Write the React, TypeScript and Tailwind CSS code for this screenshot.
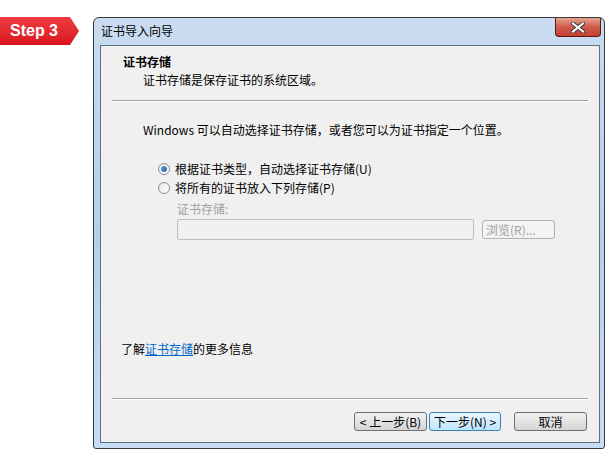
import React from "react";

const cjk = "font-['Noto_Sans_CJK_SC','Noto_Sans',sans-serif]";

function Radio({ checked }: { checked?: boolean }) {
  return (
    <span className="w-[12px] h-[12px] rounded-full border border-[#8f8f8f] bg-gradient-to-br from-[#e6e6e6] to-[#ffffff] flex items-center justify-center shrink-0">
      {checked && <span className="w-[6px] h-[6px] rounded-full bg-gradient-to-br from-[#64a3e6] to-[#1f5fa8]" />}
    </span>
  );
}

function Btn({ children, active }: { children: React.ReactNode; active?: boolean }) {
  return (
    <button
      className={
        active
          ? "w-[72px] h-[19px] rounded-[3px] border border-[#3c7fb1] bg-gradient-to-b from-[#eaf6fd] to-[#bee6fd] text-[12px] leading-none text-black flex items-center justify-center"
          : "w-[73px] h-[19px] rounded-[3px] border border-[#707070] bg-gradient-to-b from-[#f2f2f2] to-[#d4d4d4] text-[12px] leading-none text-black flex items-center justify-center"
      }
    >
      {children}
    </button>
  );
}

export default function App() {
  return (
    <div className={`w-[605px] h-[457px] bg-white flex items-start ${cjk}`}>
      <div className="mt-[17px] w-[79px] h-[28px] bg-gradient-to-b from-[#ef3b40] to-[#d9141c] [clip-path:polygon(0_0,70px_0,79px_50%,70px_100%,0_100%)] flex items-center pl-[10px]">
        <span className="text-white font-bold text-[16px] leading-none font-['Liberation_Sans',sans-serif]">Step 3</span>
      </div>

      <div className="ml-[14px] mt-[17px] w-[512px] h-[432px] border border-[#3a3a3a] rounded-t-[6px] rounded-b-[3px] bg-gradient-to-b from-[#c9dcf1] via-[#b6cfe9] to-[#c8ddf3] flex flex-col">
        <div className="h-[27px] flex items-start justify-between">
          <span className="pl-[7px] pt-[6px] text-[12px] leading-[14px] text-black">证书导入向导</span>
          <div className="mr-[3px] w-[46px] h-[19px] border border-[#5b1a12] border-t-0 rounded-b-[4px] bg-gradient-to-b from-[#e6a193] via-[#cf5a48] to-[#c3402f] flex items-center justify-center">
            <svg width="14" height="11" viewBox="0 0 14 11">
              <path d="M2 1.5 L12 9.5 M12 1.5 L2 9.5" stroke="#3d3d3d" strokeWidth="4" strokeLinecap="square" />
              <path d="M2 1.5 L12 9.5 M12 1.5 L2 9.5" stroke="#ffffff" strokeWidth="2" strokeLinecap="square" />
            </svg>
          </div>
        </div>

        <div className="ml-[6px] mr-[4px] h-[398px] border border-[#5f6f82] bg-[#f0f0f0] flex flex-col text-[12px] leading-[16px] text-black">
          <div className="pt-[8px] pl-[22px] font-bold">证书存储</div>
          <div className="mt-[2px] pl-[42px]">证书存储是保存证书的系统区域。</div>
          <div className="mt-[12px] ml-[11px] mr-[11px] border-t border-[#a0a0a0] border-b border-b-white" />

          <div className="mt-[20px] pl-[42px]">Windows 可以自动选择证书存储，或者您可以为证书指定一个位置。</div>

          <div className="mt-[23px] pl-[57px] flex items-center gap-[5px]">
            <Radio checked />
            <span>根据证书类型，自动选择证书存储(U)</span>
          </div>
          <div className="mt-[3px] pl-[57px] flex items-center gap-[5px]">
            <Radio />
            <span>将所有的证书放入下列存储(P)</span>
          </div>
          <div className="mt-[5px] pl-[76px] text-[#a0a0a0]">证书存储:</div>
          <div className="mt-[2px] pl-[76px] flex items-center gap-[8px]">
            <div className="w-[297px] h-[21px] border border-[#bdbdbd] rounded-[2px] bg-[#f0f0f0]" />
            <div className="w-[73px] h-[19px] border border-[#adb2b5] rounded-[3px] bg-[#f4f4f4] text-[#a0a0a0] flex items-center pl-[3px] leading-none">浏览(R)...</div>
          </div>

          <div className="mt-[101px] pl-[20px]">
            了解<span className="text-[#0066cc] underline">证书存储</span>的更多信息
          </div>

          <div className="mt-[41px] ml-[11px] mr-[11px] border-t border-[#a0a0a0] border-b border-b-white" />

          <div className="mt-[12px] pr-[12px] flex justify-end">
            <div className="flex gap-[2px]">
              <Btn>&lt; 上一步(B)</Btn>
              <Btn active>下一步(N) &gt;</Btn>
            </div>
            <div className="ml-[13px]">
              <Btn>取消</Btn>
            </div>
          </div>
        </div>
      </div>
    </div>
  );
}
